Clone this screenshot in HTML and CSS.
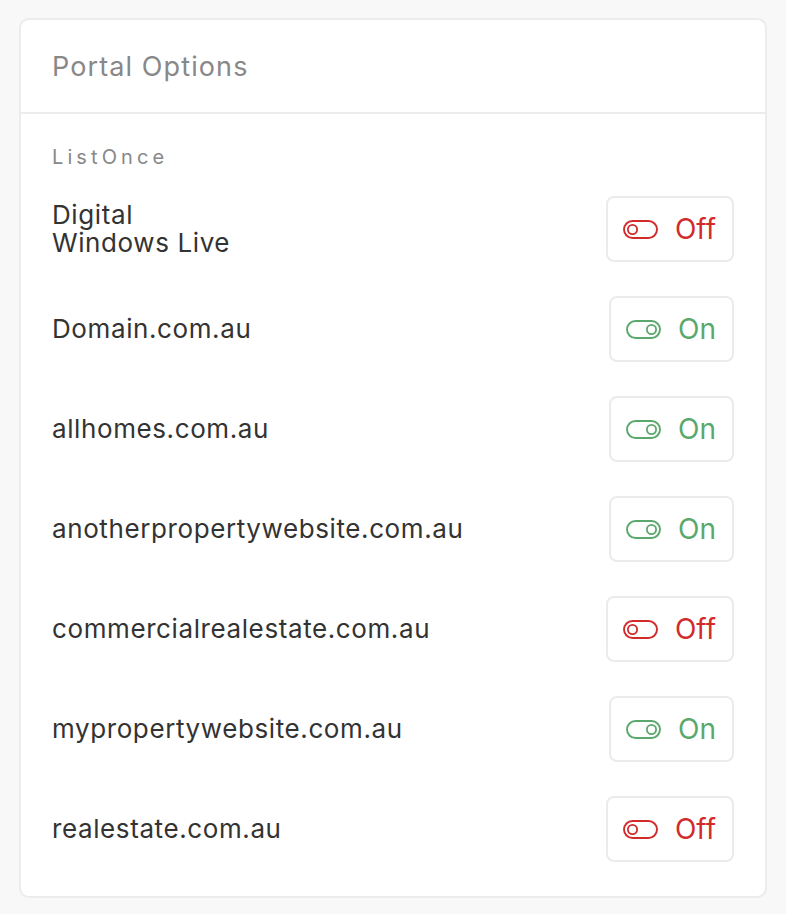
FILE: index.html
```html
<!DOCTYPE html>
<html>
<head>
<meta charset="utf-8">
<link rel="stylesheet" href="styles.css">
</head>
<body>
<div class="card">
  <div class="card-header">Portal Options</div>
  <div class="card-body">
    <div class="group-label">ListOnce</div>
    <div class="rows">
      <div class="row"><div class="name">Digital<br>Windows Live</div><button class="toggle off"><svg class="ico" viewBox="0 0 35 19"><rect x="1" y="1" width="33" height="17" rx="8.5" fill="none" stroke="currentColor" stroke-width="1.9"/><circle cx="9.5" cy="9.5" r="4.6" fill="none" stroke="currentColor" stroke-width="1.8"/></svg><span>Off</span></button></div>
      <div class="row"><div class="name">Domain.com.au</div><button class="toggle on"><svg class="ico" viewBox="0 0 35 19"><rect x="1" y="1" width="33" height="17" rx="8.5" fill="none" stroke="currentColor" stroke-width="1.9"/><circle cx="25.5" cy="9.5" r="4.6" fill="none" stroke="currentColor" stroke-width="1.8"/></svg><span>On</span></button></div>
      <div class="row"><div class="name">allhomes.com.au</div><button class="toggle on"><svg class="ico" viewBox="0 0 35 19"><rect x="1" y="1" width="33" height="17" rx="8.5" fill="none" stroke="currentColor" stroke-width="1.9"/><circle cx="25.5" cy="9.5" r="4.6" fill="none" stroke="currentColor" stroke-width="1.8"/></svg><span>On</span></button></div>
      <div class="row"><div class="name">anotherpropertywebsite.com.au</div><button class="toggle on"><svg class="ico" viewBox="0 0 35 19"><rect x="1" y="1" width="33" height="17" rx="8.5" fill="none" stroke="currentColor" stroke-width="1.9"/><circle cx="25.5" cy="9.5" r="4.6" fill="none" stroke="currentColor" stroke-width="1.8"/></svg><span>On</span></button></div>
      <div class="row"><div class="name">commercialrealestate.com.au</div><button class="toggle off"><svg class="ico" viewBox="0 0 35 19"><rect x="1" y="1" width="33" height="17" rx="8.5" fill="none" stroke="currentColor" stroke-width="1.9"/><circle cx="9.5" cy="9.5" r="4.6" fill="none" stroke="currentColor" stroke-width="1.8"/></svg><span>Off</span></button></div>
      <div class="row"><div class="name">mypropertywebsite.com.au</div><button class="toggle on"><svg class="ico" viewBox="0 0 35 19"><rect x="1" y="1" width="33" height="17" rx="8.5" fill="none" stroke="currentColor" stroke-width="1.9"/><circle cx="25.5" cy="9.5" r="4.6" fill="none" stroke="currentColor" stroke-width="1.8"/></svg><span>On</span></button></div>
      <div class="row"><div class="name">realestate.com.au</div><button class="toggle off"><svg class="ico" viewBox="0 0 35 19"><rect x="1" y="1" width="33" height="17" rx="8.5" fill="none" stroke="currentColor" stroke-width="1.9"/><circle cx="9.5" cy="9.5" r="4.6" fill="none" stroke="currentColor" stroke-width="1.8"/></svg><span>Off</span></button></div>
    </div>
  </div>
</div>
</body>
</html>
```
FILE: styles.css
```css
html, body {
  margin: 0;
  padding: 0;
  background: #f8f8f8;
}
body {
  padding: 18px 19px 17px 19px;
  font-family: Inter, "Liberation Sans", sans-serif;
  color: #333;
}
.card {
  background: #fff;
  border: 2px solid #ececec;
  border-radius: 10px;
  box-sizing: border-box;
  width: 748px;
}
.card-header {
  height: 94px;
  box-sizing: border-box;
  padding: 0 31px;
  display: flex;
  align-items: center;
  font-size: 27px;
  letter-spacing: 1.1px;
  color: #888;
  border-bottom: 2px solid #ececec;
}
.card-body {
  padding: 31px 31px 34px 31px;
}
.group-label {
  font-size: 20px;
  line-height: 24px;
  letter-spacing: 4.1px;
  color: #888;
}
.rows {
  margin-top: 27px;
  display: flex;
  flex-direction: column;
  gap: 34px;
}
.row {
  display: flex;
  align-items: center;
  justify-content: space-between;
  height: 66px;
}
.name {
  font-size: 26px;
  line-height: 28px;
  letter-spacing: 0.6px;
  color: #333;
}
.toggle {
  height: 66px;
  box-sizing: border-box;
  border: 2px solid #ebebeb;
  border-radius: 8px;
  background: #fff;
  padding: 0 16px 0 15px;
  display: flex;
  align-items: center;
  gap: 17px;
  font-family: inherit;
  font-size: 28px;
}
.toggle.off { color: #d22b2b; }
.toggle.on { color: #5aa86b; }
.ico {
  width: 35px;
  height: 19px;
  display: block;
}
```
